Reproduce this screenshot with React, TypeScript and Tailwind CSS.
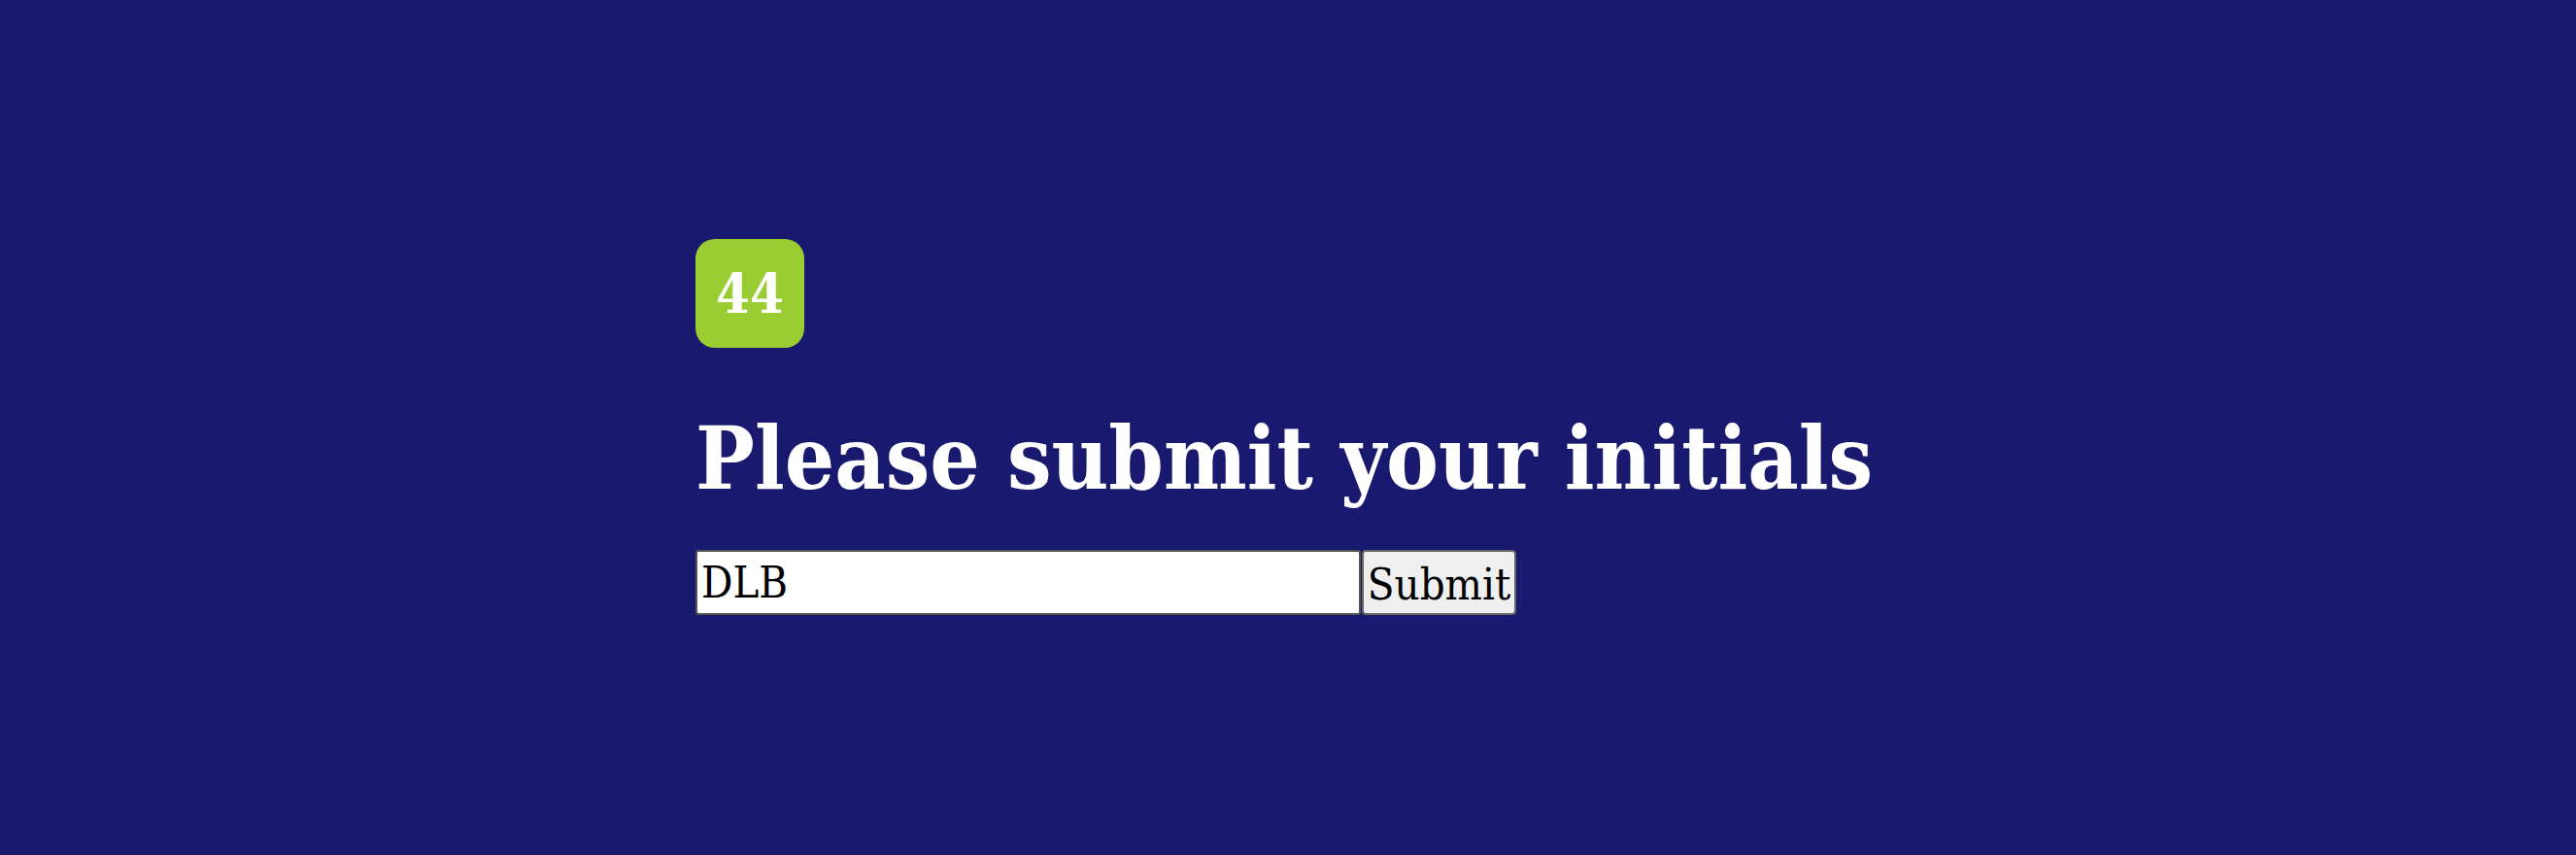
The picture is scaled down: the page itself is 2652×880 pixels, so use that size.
import React, { useState } from 'react';

export default function App() {
    const [initials, setInitials] = useState('DLB');

    return (
        <div className="min-h-[880px] bg-[#191970] font-['DejaVu_Serif_Condensed','DejaVu_Serif',serif] font-stretch-condensed text-[45px] text-white">
            <div className="mx-auto w-[1220px] pt-[246px]">
                {/* Question number badge */}
                <div className="flex h-[112px] w-[112px] items-center justify-center rounded-[20px] bg-[#9acd32] text-[56px] font-bold leading-none">
                    44
                </div>

                <h1 className="mt-[68px] text-[90px] font-bold leading-none">Please submit your initials</h1>

                <form className="mt-[50px] flex" onSubmit={(e) => e.preventDefault()}>
                    <input
                        type="text"
                        value={initials}
                        onChange={(e) => setInitials(e.target.value)}
                        className="h-[67px] w-[685px] rounded-[3px] border-2 border-[#555555] bg-white px-[4px] text-[45px] text-black"
                    />
                    <button
                        type="submit"
                        className="ml-[1px] h-[67px] w-[159px] rounded-[4px] border-2 border-[#666666] bg-[#efefef] text-[45px] text-black"
                    >
                        Submit
                    </button>
                </form>
            </div>
        </div>
    );
}
